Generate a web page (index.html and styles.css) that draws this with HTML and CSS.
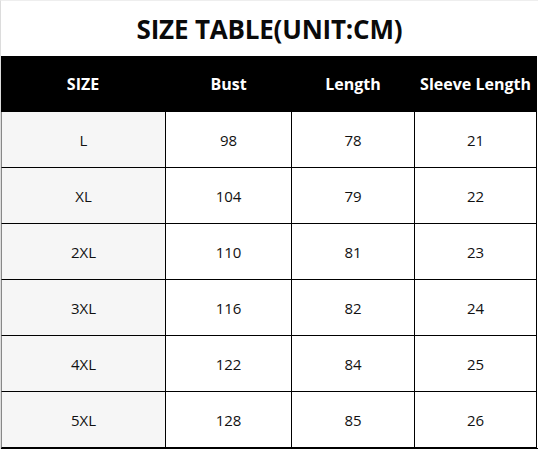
FILE: index.html
```html
<!DOCTYPE html>
<html>
<head>
<meta charset="utf-8">
<link rel="stylesheet" href="styles.css">
</head>
<body>
<div class="page">
  <h1 class="title">SIZE TABLE(UNIT:CM)</h1>
  <div class="table">
    <div class="cell head">SIZE</div>
    <div class="cell head">Bust</div>
    <div class="cell head">Length</div>
    <div class="cell head">Sleeve Length</div>

    <div class="cell first">L</div><div class="cell">98</div><div class="cell">78</div><div class="cell">21</div>
    <div class="cell first">XL</div><div class="cell">104</div><div class="cell">79</div><div class="cell">22</div>
    <div class="cell first">2XL</div><div class="cell">110</div><div class="cell">81</div><div class="cell">23</div>
    <div class="cell first">3XL</div><div class="cell">116</div><div class="cell">82</div><div class="cell">24</div>
    <div class="cell first">4XL</div><div class="cell">122</div><div class="cell">84</div><div class="cell">25</div>
    <div class="cell first">5XL</div><div class="cell">128</div><div class="cell">85</div><div class="cell">26</div>
  </div>
</div>
</body>
</html>
```

FILE: styles.css
```css
html, body {
  margin: 0;
  padding: 0;
  background: #ffffff;
}

.page {
  width: 538px;
  height: 449px;
  box-sizing: border-box;
  border-left: 1px solid #dcdcdc;
  border-top: 1px solid #eeeeee;
  font-family: "Open Sans", "Noto Sans", "DejaVu Sans", sans-serif;
  color: #111;
}

.title {
  margin: 0;
  height: 55px;
  display: flex;
  align-items: center;
  justify-content: center;
  font-size: 26px;
  font-weight: 700;
  letter-spacing: -0.2px;
  color: #0a0a0a;
}

.table {
  display: grid;
  grid-template-columns: 165px 126px 123px 122px;
  grid-auto-rows: 56px;
  border-bottom: 2px solid #000;
  width: 537px;
}

.cell {
  display: flex;
  align-items: center;
  justify-content: center;
  font-size: 15px;
  border-right: 1.5px solid #000;
  border-bottom: 1.5px solid #000;
  box-sizing: border-box;
  background: #fff;
}

.head {
  background: #000;
  color: #fff;
  font-weight: 700;
  font-size: 16px;
  border-color: #000;
  border-bottom: none;
}

.first {
  background: #f6f6f6;
  border-left: 1px solid #888;
}
```
